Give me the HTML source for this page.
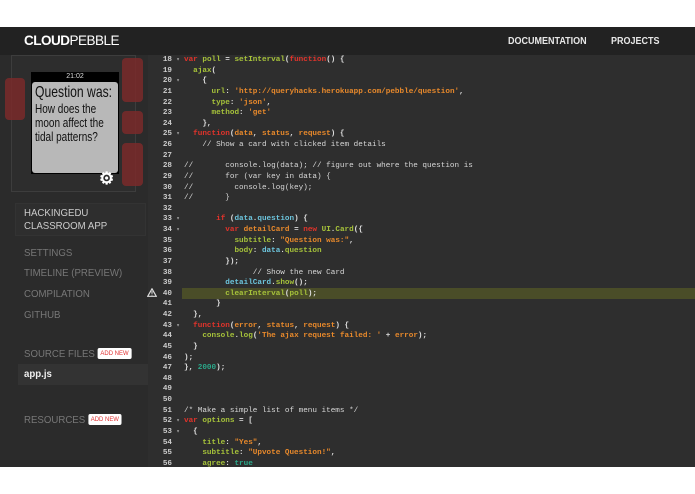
<!DOCTYPE html><html><head><style>
*{margin:0;padding:0;box-sizing:border-box}
body{width:695px;height:494px;background:#fff;position:relative;overflow:hidden;font-family:"Liberation Sans",sans-serif}
.hdr{position:absolute;top:27px;left:0;width:695px;height:28px;background:#222}
.logo{position:absolute;left:24px;top:6px;color:#fff;font-size:13.5px;font-weight:bold;letter-spacing:-0.5px}
.logo span{font-weight:normal}
.nav{position:absolute;top:9px;color:#e8e8e8;font-size:10px;font-weight:bold;transform:scaleX(.9);transform-origin:left}
.side{position:absolute;top:55px;left:0;width:148px;height:412px;background:#2b2b2b}
.ed{position:absolute;top:55px;left:148px;width:547px;height:412px;background:#2e2e2e;overflow:hidden}
.btn{position:absolute;background:#7a2a2a;border-radius:4px;opacity:.85}
.si{position:absolute;left:24px;color:#777;font-size:10.5px;transform:scaleX(.92);transform-origin:left;white-space:nowrap}
.add{display:inline-block;background:#fff;color:#e03030;font-size:6.5px;padding:2px 3px;border-radius:2px;vertical-align:2px;margin-left:3px}
.code{position:absolute;left:0;top:0;font-family:"Liberation Mono",monospace;font-size:7.65px;line-height:10.63px;color:#ddd;font-weight:bold;white-space:pre}
.ln{display:inline-block;width:24px;text-align:right;color:#ccc}
.ar{display:inline-block;width:12px;color:#aaa;font-size:6px;text-align:center}
.k{color:#e0332b}.g{color:#a6c23a}.s{color:#e8892b}.c{color:#d8d8d8;font-weight:normal}.b{color:#6cc4dc}.t{color:#2aa88a}
.hl{position:absolute;left:34px;top:233px;width:513px;height:10.6px;background:#4a4d28}
.scr{transform-origin:left;white-space:nowrap;color:#111}
</style></head><body>
<div class="hdr"><div class="logo">CLOUD<span>PEBBLE</span></div>
<div class="nav" style="left:508px">DOCUMENTATION</div><div class="nav" style="left:611px">PROJECTS</div></div>
<div class="side">
<div style="position:absolute;left:11px;top:0;width:125px;height:137px;border:1px solid #3d3d3d;background:#2d2d2d"></div>
<div class="btn" style="left:5px;top:23px;width:20px;height:42px"></div>
<div class="btn" style="left:122px;top:3px;width:21px;height:44px"></div>
<div class="btn" style="left:122px;top:56px;width:21px;height:23px"></div>
<div class="btn" style="left:122px;top:88px;width:21px;height:43px"></div>
<div style="position:absolute;left:31px;top:17px;width:88px;height:102px;background:#000"></div>
<div style="position:absolute;left:31px;top:17px;width:88px;height:10px;color:#ddd;font-size:7px;text-align:center;line-height:10px">21:02</div>
<div style="position:absolute;left:32px;top:27px;width:86px;height:91px;background:#b8b8b8;border-radius:3px;padding:2px 3px">
<div class="scr" style="font-size:16px;line-height:18px;transform:scaleX(.76)">Question was:</div>
<div class="scr" style="font-size:12.5px;line-height:14px;transform:scaleX(.8)">How does the<br>moon affect the<br>tidal patterns?</div></div>
<div style="position:absolute;left:99px;top:114px;color:#fff;font-size:17px;font-weight:bold">⚙</div>
<div style="position:absolute;left:15px;top:148px;width:131px;height:33px;background:#2e2e2e;border:1px solid #333"></div>
<div class="si" style="top:152px;color:#ccc">HACKINGEDU</div>
<div class="si" style="top:165px;color:#ccc">CLASSROOM APP</div>
<div class="si" style="top:192px">SETTINGS</div>
<div class="si" style="top:212px">TIMELINE (PREVIEW)</div>
<div class="si" style="top:233px">COMPILATION</div>
<div class="si" style="top:254px">GITHUB</div>
<div class="si" style="top:293px">SOURCE FILES<span class="add">ADD NEW</span></div>
<div style="position:absolute;left:18px;top:309px;width:130px;height:21px;background:#333"></div>
<div class="si" style="top:313px;color:#eee;font-weight:bold">app.js</div>
<div class="si" style="top:359px">RESOURCES<span class="add">ADD NEW</span></div>
</div>
<div class="ed"><div class="hl"></div><div class="code"><span class="ln">18</span><span class="ar">▾</span><span class="k">var</span> <span class="g">poll</span> = <span class="g">setInterval</span>(<span class="k">function</span>() {
<span class="ln">19</span><span class="ar"></span>  <span class="g">ajax</span>(
<span class="ln">20</span><span class="ar">▾</span>    {
<span class="ln">21</span><span class="ar"></span>      <span class="g">url</span>: <span class="s">'http://queryhacks.herokuapp.com/pebble/question'</span>,
<span class="ln">22</span><span class="ar"></span>      <span class="g">type</span>: <span class="s">'json'</span>,
<span class="ln">23</span><span class="ar"></span>      <span class="g">method</span>: <span class="s">'get'</span>
<span class="ln">24</span><span class="ar"></span>    },
<span class="ln">25</span><span class="ar">▾</span>  <span class="k">function</span>(<span class="s">data</span>, <span class="s">status</span>, <span class="s">request</span>) {
<span class="ln">26</span><span class="ar"></span>    <span class="c">// Show a card with clicked item details</span>
<span class="ln">27</span><span class="ar"></span>
<span class="ln">28</span><span class="ar"></span><span class="c">//       console.log(data); // figure out where the question is</span>
<span class="ln">29</span><span class="ar"></span><span class="c">//       for (var key in data) {</span>
<span class="ln">30</span><span class="ar"></span><span class="c">//         console.log(key);</span>
<span class="ln">31</span><span class="ar"></span><span class="c">//       }</span>
<span class="ln">32</span><span class="ar"></span>
<span class="ln">33</span><span class="ar">▾</span>       <span class="k">if</span> (<span class="b">data</span>.<span class="b">question</span>) {
<span class="ln">34</span><span class="ar">▾</span>         <span class="k">var</span> <span class="s">detailCard</span> = <span class="k">new</span> <span class="g">UI</span>.<span class="g">Card</span>({
<span class="ln">35</span><span class="ar"></span>           <span class="g">subtitle</span>: <span class="s">"Question was:"</span>,
<span class="ln">36</span><span class="ar"></span>           <span class="g">body</span>: <span class="b">data</span>.<span class="g">question</span>
<span class="ln">37</span><span class="ar"></span>         });
<span class="ln">38</span><span class="ar"></span>               <span class="c">// Show the new Card</span>
<span class="ln">39</span><span class="ar"></span>         <span class="b">detailCard</span>.<span class="g">show</span>();
<span class="ln">40</span><span class="ar"></span>         <span class="g">clearInterval</span>(<span class="g">poll</span>);
<span class="ln">41</span><span class="ar"></span>       }
<span class="ln">42</span><span class="ar"></span>  },
<span class="ln">43</span><span class="ar">▾</span>  <span class="k">function</span>(<span class="s">error</span>, <span class="s">status</span>, <span class="s">request</span>) {
<span class="ln">44</span><span class="ar"></span>    <span class="g">console</span>.<span class="g">log</span>(<span class="s">'The ajax request failed: '</span> + <span class="s">error</span>);
<span class="ln">45</span><span class="ar"></span>  }
<span class="ln">46</span><span class="ar"></span>);
<span class="ln">47</span><span class="ar"></span>}, <span class="t">2000</span>);
<span class="ln">48</span><span class="ar"></span>
<span class="ln">49</span><span class="ar"></span>
<span class="ln">50</span><span class="ar"></span>
<span class="ln">51</span><span class="ar"></span><span class="c">/* Make a simple list of menu items */</span>
<span class="ln">52</span><span class="ar">▾</span><span class="k">var</span> <span class="g">options</span> = [
<span class="ln">53</span><span class="ar">▾</span>  {
<span class="ln">54</span><span class="ar"></span>    <span class="g">title</span>: <span class="s">"Yes"</span>,
<span class="ln">55</span><span class="ar"></span>    <span class="g">subtitle</span>: <span class="s">"Upvote Question!"</span>,
<span class="ln">56</span><span class="ar"></span>    <span class="g">agree</span>: <span class="t">true</span>
</div></div>
<svg style="position:absolute;left:147px;top:288px;z-index:5" width="10" height="9" viewBox="0 0 10 9"><path d="M5 0.8L9.3 8.3H0.7Z" fill="none" stroke="#ddd" stroke-width="1.2"/><path d="M5 3.2V5.8" stroke="#ddd" stroke-width="1.1"/><circle cx="5" cy="7" r="0.5" fill="#ddd"/></svg>
</body></html>
